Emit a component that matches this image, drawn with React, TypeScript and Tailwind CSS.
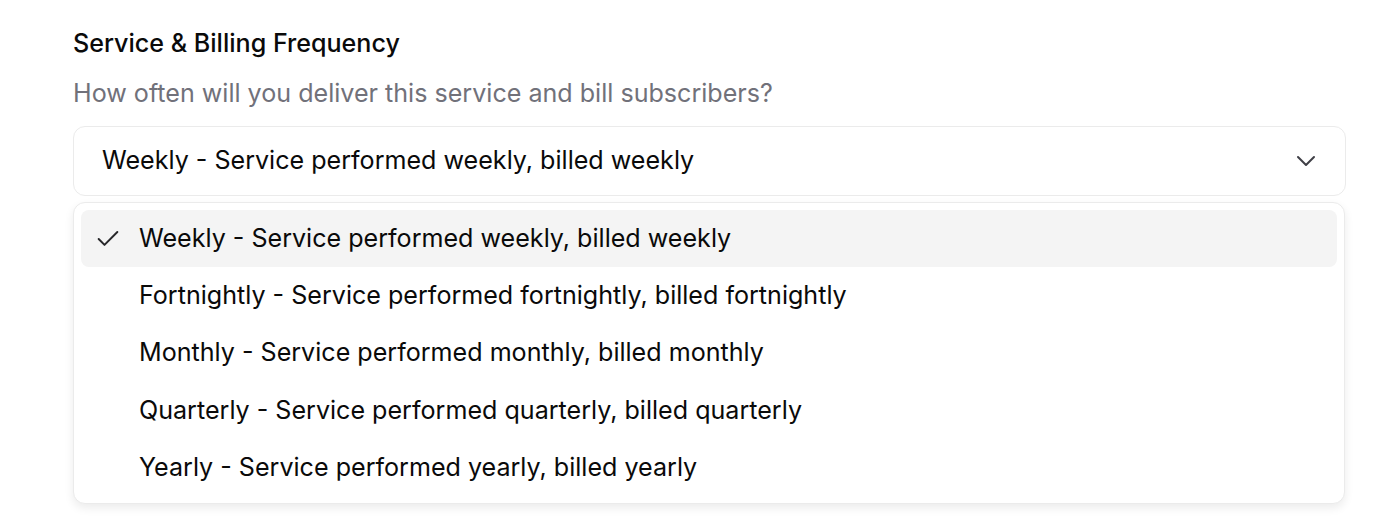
import React from 'react'

const options = [
  'Weekly - Service performed weekly, billed weekly',
  'Fortnightly - Service performed fortnightly, billed fortnightly',
  'Monthly - Service performed monthly, billed monthly',
  'Quarterly - Service performed quarterly, billed quarterly',
  'Yearly - Service performed yearly, billed yearly',
]

export default function App() {
  const selected = 0
  return (
    <div className="min-h-[526px] w-full bg-white font-['Inter',sans-serif] text-[#0a0a0a]">
      <div className="w-[1273px] ml-[73px] pt-[26px]">
        <label className="block text-[25.1px] font-medium leading-[34px]">Service &amp; Billing Frequency</label>
        <p className="mt-[16px] text-[25.1px] leading-[34px] text-[#71717a]">
          How often will you deliver this service and bill subscribers?
        </p>
        <button className="mt-[16px] flex h-[70px] w-full items-center justify-between rounded-[12px] border border-[#ebebeb] bg-white pl-[28px] pr-[23px] text-left text-[25.1px]">
          <span>{options[selected]}</span>
          <svg width="32" height="32" viewBox="0 0 24 24" fill="none" stroke="#3f3f46" strokeWidth="1.5" strokeLinecap="round" strokeLinejoin="round">
            <path d="m6 9 6 6 6-6" />
          </svg>
        </button>
        <div className="mt-[6px] w-[1272px] rounded-[12px] border border-[#ebebeb] bg-white p-[7px] shadow-[0_4px_10px_rgba(0,0,0,0.08)]">
          {options.map((o, i) => (
            <div
              key={o}
              className={`flex h-[57.25px] items-center rounded-[8px] text-[25.1px] ${i === selected ? 'bg-[#f4f4f4]' : ''}`}
            >
              <span className="flex w-[58px] pl-[13px]">
                {i === selected && (
                  <svg width="28" height="28" viewBox="0 0 24 24" fill="none" stroke="#27272a" strokeWidth="1.7" strokeLinecap="round" strokeLinejoin="round">
                    <path d="M20 6 9 17l-5-5" />
                  </svg>
                )}
              </span>
              <span>{o}</span>
            </div>
          ))}
        </div>
      </div>
    </div>
  )
}
